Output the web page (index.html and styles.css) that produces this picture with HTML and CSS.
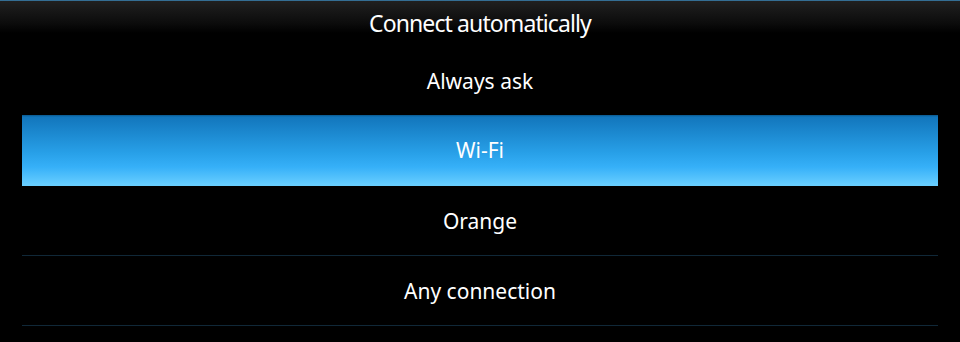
FILE: index.html
```html
<html>
<head>
<link rel="stylesheet" href="styles.css">
</head>
<body>

  <div class="header">
    <span class="title">Connect automatically</span>
  </div>

  <div class="option-list">
    <div class="option">Always ask</div>
    <div class="option selected">Wi-Fi</div>
    <div class="option">Orange</div>
    <div class="option">Any connection</div>
  </div>

</body>
</html>
```

FILE: styles.css
```css
body {
  margin: 0;
  background-color: black;
  color: white;
  font-family: "Noto Sans", sans-serif;
  overflow: hidden;
}

.header {
  height: 45px;
  border-top: 1px solid rgb(52, 110, 148);
  background: linear-gradient(to bottom, rgb(32, 32, 32) 0px, rgb(12, 12, 12) 22px, black 32px);
  display: flex;
  justify-content: center;
  align-items: center;
}

.title {
  font-size: 23px;
  letter-spacing: -0.9px;
  margin-top: -2px;
}

.option-list {
  padding: 0 22px;
}

.option {
  height: 69px;
  border-bottom: 1px solid rgb(16, 40, 56);
  display: flex;
  justify-content: center;
  align-items: center;
  font-size: 21px;
}

.selected {
  margin-top: -1px;
  height: 70px;
  border-bottom-color: rgb(104, 206, 255);
  background: linear-gradient(to bottom, rgb(10, 88, 140) 0px, rgb(18, 118, 188) 2px, rgb(40, 160, 232) 38px, rgb(54, 176, 248) 52px, rgb(104, 206, 255) 70px);
}
```
